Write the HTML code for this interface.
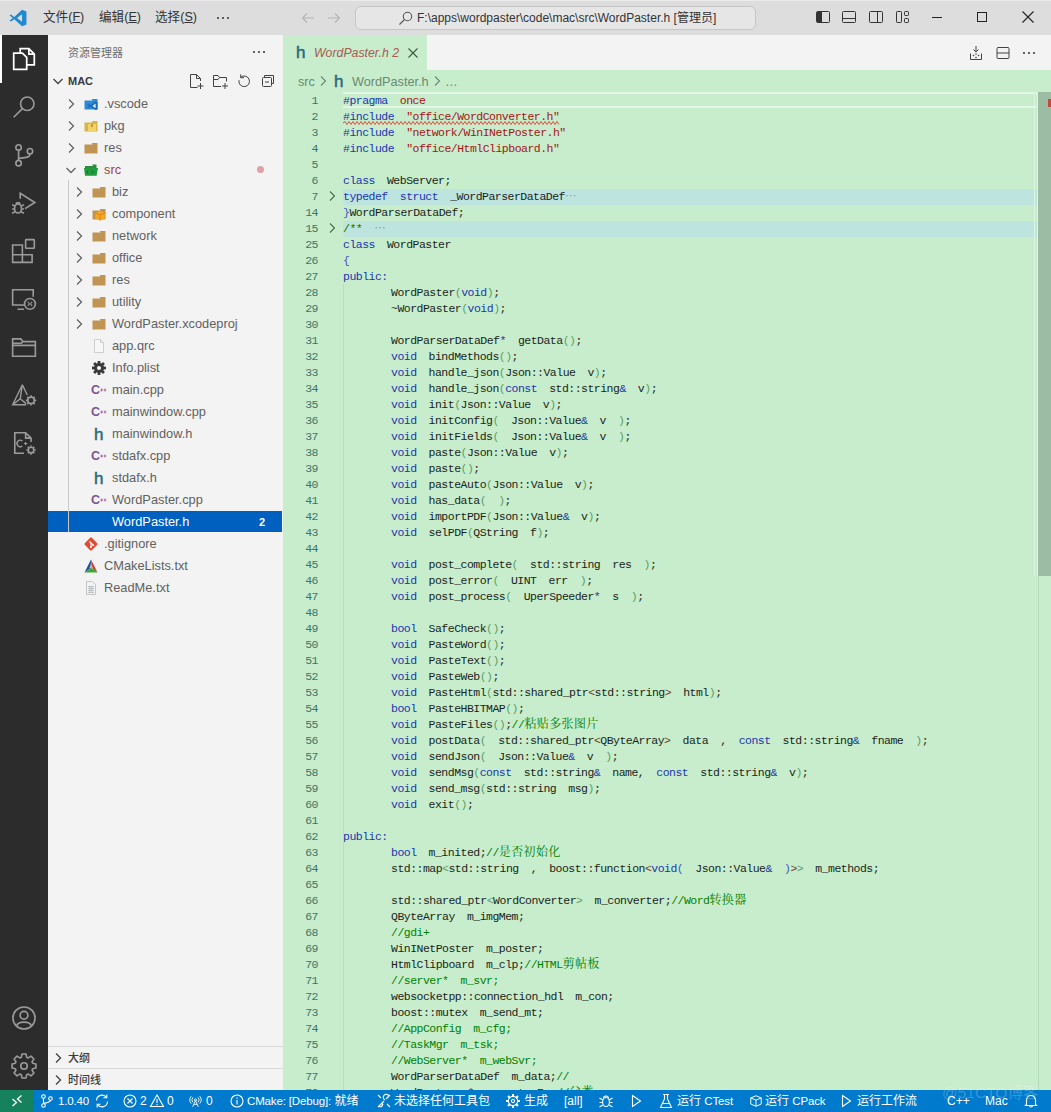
<!DOCTYPE html>
<html lang="zh-CN">
<head>
<meta charset="utf-8">
<title>WordPaster.h - mac - Visual Studio Code</title>
<style>
html,body{margin:0;padding:0;}
body{width:1051px;height:1112px;overflow:hidden;position:relative;background:#c7edcc;
  font-family:"Liberation Sans","Noto Sans CJK SC",sans-serif;font-size:13px;color:#616161;}
*{box-sizing:border-box;}
.a{position:absolute;}
svg{display:block;position:absolute;overflow:visible;}
/* title bar */
#titlebar{position:absolute;left:0;top:0;width:1051px;height:35px;background:#dddddd;color:#333;}
#titlebar .menu{position:absolute;top:0;height:35px;line-height:34px;font-size:12.6px;color:#333;white-space:nowrap;}
#cmd{position:absolute;left:355px;top:6px;width:401px;height:24px;border:1px solid #c6c6c6;border-radius:6px;background:#e6e6e6;}
#cmd span{position:absolute;left:61px;top:0;line-height:22px;font-size:12px;color:#333;white-space:nowrap;}
/* activity bar */
#activity{position:absolute;left:0;top:35px;width:48px;height:1055px;background:#2c2c2c;}
/* sidebar */
#sidebar{position:absolute;left:48px;top:35px;width:235px;height:1055px;background:#f3f3f3;overflow:hidden;}
.row{position:absolute;left:0;width:235px;height:22px;line-height:22px;font-size:12.8px;color:#616161;white-space:nowrap;}
.row .lbl{position:absolute;top:0;}
.sel{color:#fff;}
.pane{position:absolute;left:0;width:235px;height:23px;border-top:1px solid #d8d8d8;line-height:22px;font-size:11px;font-weight:500;color:#3b3b3b;}
/* editor */
#editor{position:absolute;left:283px;top:35px;width:768px;height:1055px;background:#c7edcc;overflow:hidden;}
#tabs{position:absolute;left:0;top:0;width:768px;height:35px;background:#f3f3f3;}
#tab{position:absolute;left:0;top:0;width:144px;height:35px;background:#c7edcc;}
#crumbs{position:absolute;left:0;top:35px;width:768px;height:22px;line-height:25px;color:#6b8a72;font-size:12.7px;white-space:nowrap;}
#code{position:absolute;left:0;top:58px;width:768px;height:998px;overflow:hidden;}
.ln{position:absolute;left:0;width:768px;height:16px;line-height:16px;white-space:pre;
  font-family:"Liberation Mono","Noto Serif CJK SC",monospace;font-size:11.5px;letter-spacing:-0.52px;word-spacing:5.7px;color:#1a1f1a;}
.ln .n{position:absolute;left:0;top:0;width:35px;text-align:right;color:#36776e;}
.ln .c{position:absolute;left:60px;top:0;}
.ln .t{position:absolute;left:108px;top:0;}
.fold{background:#bde4df;}
.k{color:#2036ae;} .s{color:#a31515;} .m{color:#008000;} .b1{color:#3a55c8;} .b2{color:#5c9e68;} .b3{color:#7b3814;}
.cj{line-height:0;font-size:12px;letter-spacing:0.38px;font-family:"Noto Serif CJK SC","Liberation Mono",serif;}
/* status */
#status{position:absolute;left:0;top:1090px;width:1051px;height:22px;background:#007acc;color:#fff;font-size:12px;line-height:22px;white-space:nowrap;}
#status .it{position:absolute;top:0;height:22px;}
.l{font-style:normal;font-size:11.5px;letter-spacing:-0.15px;}
</style>
</head>
<body>
<div id="titlebar">
<div class="a" style="left:0;top:0;width:1051px;height:1px;background:#ebebeb"></div>
<svg style="left:8.5px;top:8.5px" width="18" height="18" viewBox="0 0 16 16"><path d="M11.6 0.6 L4.7 7 L1.8 4.8 L0.5 5.5 L3.3 8 L0.5 10.5 L1.8 11.2 L4.7 9 L11.6 15.4 L15.5 13.8 V2.2 Z M11.6 4.6 V11.4 L7.1 8 Z" fill="#1f8ad2" fill-rule="evenodd"/></svg>
<div class="menu" style="left:43px">文件(<u>F</u>)</div>
<div class="menu" style="left:99px">编辑(<u>E</u>)</div>
<div class="menu" style="left:155px">选择(<u>S</u>)</div>
<svg style="left:215px;top:10px" width="16" height="16" viewBox="0 0 16 16"><circle cx="3" cy="8" r="1" fill="#333"/><circle cx="8" cy="8" r="1" fill="#333"/><circle cx="13" cy="8" r="1" fill="#333"/></svg>
<svg style="left:300px;top:10px" width="16" height="16" viewBox="0 0 16 16"><path d="M14 8 H2.5 M7 3.5 L2.5 8 L7 12.5" fill="none" stroke="#b4b4b4" stroke-width="1.1"/></svg>
<svg style="left:326px;top:10px" width="16" height="16" viewBox="0 0 16 16"><path d="M2 8 H13.5 M9 3.5 L13.5 8 L9 12.5" fill="none" stroke="#b4b4b4" stroke-width="1.1"/></svg>
<div id="cmd"><svg style="left:42px;top:3px" width="16" height="16" viewBox="0 0 16 16"><circle cx="9.5" cy="6.5" r="4.2" fill="none" stroke="#555" stroke-width="1.1"/><path d="M6.5 9.5 L1.5 14.5" stroke="#555" stroke-width="1.1"/></svg><span>F:\apps\wordpaster\code\mac\src\WordPaster.h [管理员]</span></div>
<svg style="left:815px;top:9px" width="16" height="16" viewBox="0 0 16 16"><rect x="1.5" y="2.5" width="13" height="11" rx="1" fill="none" stroke="#333" stroke-width="1"/><rect x="2" y="3" width="5" height="10" fill="#333"/></svg>
<svg style="left:841px;top:9px" width="16" height="16" viewBox="0 0 16 16"><rect x="1.5" y="2.5" width="13" height="11" rx="1" fill="none" stroke="#333" stroke-width="1"/><path d="M1.5 9.5 H14.5" fill="none" stroke="#333" stroke-width="1"/></svg>
<svg style="left:868px;top:9px" width="16" height="16" viewBox="0 0 16 16"><rect x="1.5" y="2.5" width="13" height="11" rx="1" fill="none" stroke="#333" stroke-width="1"/><path d="M9.5 2.5 V13.5" fill="none" stroke="#333" stroke-width="1"/></svg>
<svg style="left:895px;top:9px" width="16" height="16" viewBox="0 0 16 16"><rect x="1.5" y="2.5" width="5" height="11" rx="0.8" fill="none" stroke="#333" stroke-width="1"/><rect x="9.5" y="2.5" width="4" height="4" rx="0.8" fill="none" stroke="#333" stroke-width="1"/><rect x="9.5" y="9.5" width="4" height="4" rx="0.8" fill="none" stroke="#333" stroke-width="1"/></svg>
<div class="a" style="left:932px;top:17px;width:10px;height:1px;background:#222"></div>
<div class="a" style="left:977px;top:12px;width:10px;height:10px;border:1px solid #222"></div>
<svg style="left:1022px;top:11px" width="12" height="12" viewBox="0 0 12 12"><path d="M0.5 0.5 L11.5 11.5 M11.5 0.5 L0.5 11.5" stroke="#222" stroke-width="1.1"/></svg>
</div>
<div id="activity">
<div class="a" style="left:0;top:0;width:2px;height:48px;background:#fff"></div>
<svg style="left:11px;top:11px" width="26" height="26" viewBox="0 0 24 24"><path d="M8.5 6.5 V2.5 H16.5 L21.5 7.5 V17.5 H14.5 M16.5 2.5 V7.5 H21.5" fill="none" stroke="#fff" stroke-width="1.6"/><path d="M2.5 6.5 H10.5 L14.5 10.5 V21.5 H2.5 Z" fill="none" stroke="#fff" stroke-width="1.6"/></svg>
<svg style="left:11px;top:59px" width="26" height="26" viewBox="0 0 24 24"><circle cx="15" cy="9" r="6.2" fill="none" stroke="#9a9a9a" stroke-width="1.5"/><path d="M10.5 13.5 L2.5 21.5" fill="none" stroke="#9a9a9a" stroke-width="1.5"/></svg>
<svg style="left:11px;top:107px" width="26" height="26" viewBox="0 0 24 24"><circle cx="7" cy="5" r="2.5" fill="none" stroke="#9a9a9a" stroke-width="1.5"/><circle cx="7" cy="19.5" r="2.5" fill="none" stroke="#9a9a9a" stroke-width="1.5"/><circle cx="17.5" cy="8.5" r="2.5" fill="none" stroke="#9a9a9a" stroke-width="1.5"/><path d="M7 7.5 V17 M17.5 11 C17.5 14.5 13 14.5 7.5 15" fill="none" stroke="#9a9a9a" stroke-width="1.5"/></svg>
<svg style="left:11px;top:155px" width="26" height="26" viewBox="0 0 24 24"><path d="M8.5 8 V3 L22 11.5 L13 17.2" fill="none" stroke="#9a9a9a" stroke-width="1.5"/><ellipse cx="6.5" cy="17" rx="3.2" ry="4.2" fill="none" stroke="#9a9a9a" stroke-width="1.5"/><path d="M1 13.5 L3.8 15 M1 17.5 H3.3 M1 21.5 L3.8 20 M12 13.5 L9.2 15 M12 17.5 H9.7 M12 21.5 L9.2 20 M4.5 12.8 A2.2 2.2 0 0 1 8.5 12.8" fill="none" stroke="#9a9a9a" stroke-width="1.5"/></svg>
<svg style="left:11px;top:203px" width="26" height="26" viewBox="0 0 24 24"><path d="M1.5 6.5 H10.5 V15.5 H19.5 V22.5 H1.5 Z M1.5 15.5 H10.5 V22.5" fill="none" stroke="#9a9a9a" stroke-width="1.5"/><rect x="13.5" y="1.5" width="8" height="8" rx="0.5" fill="none" stroke="#9a9a9a" stroke-width="1.5"/></svg>
<svg style="left:11px;top:251px" width="26" height="26" viewBox="0 0 24 24"><path d="M12 17.5 H1.5 V3.5 H20.5 V10 M6 21.5 H12" fill="none" stroke="#9a9a9a" stroke-width="1.5"/><circle cx="17.5" cy="16.5" r="5" fill="none" stroke="#9a9a9a" stroke-width="1.5"/><path d="M15.5 14.5 L17 16.5 L15.5 18.5 M19.5 14.5 L18 16.5 L19.5 18.5" fill="none" stroke="#9a9a9a" stroke-width="1"/></svg>
<svg style="left:11px;top:299px" width="26" height="26" viewBox="0 0 24 24"><path d="M1.5 20.5 V4.5 H9 L11 7 H22.5 V20.5 Z M1.5 10.5 H22.5" fill="none" stroke="#9a9a9a" stroke-width="1.5"/><path d="M1.5 8.5 H9.5 L11 7" fill="none" stroke="#9a9a9a" stroke-width="1.5"/></svg>
<svg style="left:11px;top:347px" width="26" height="26" viewBox="0 0 24 24"><path d="M10.5 2.5 L1.5 21 H14 M10.5 2.5 L15 12 M10.5 2.5 L8.5 15.5 L1.5 21 M8.5 15.5 L14 20" fill="none" stroke="#9a9a9a" stroke-width="1.3"/><circle cx="18.5" cy="17" r="3" fill="none" stroke="#9a9a9a" stroke-width="1.5"/><path d="M18.5 12.2 V13.5 M18.5 20.5 V21.8 M13.7 17 H15 M22 17 H23.3 M15.1 13.6 L16 14.5 M21 19.5 L21.9 20.4 M21.9 13.6 L21 14.5 M16 19.5 L15.1 20.4" fill="none" stroke="#9a9a9a" stroke-width="1.5"/></svg>
<svg style="left:11px;top:395px" width="26" height="26" viewBox="0 0 24 24"><path d="M12 21.5 H3.5 V2.5 H13.5 L18.5 7.5 V11 M13.5 2.5 V7.5 H18.5" fill="none" stroke="#9a9a9a" stroke-width="1.5"/><path d="M10.5 10.2 A3 3 0 1 0 10.5 14.8" fill="none" stroke="#9a9a9a" stroke-width="1.3"/><path d="M12 12.5 H15 M13.5 11 V14" stroke="#9a9a9a" stroke-width="1"/><circle cx="18.5" cy="18.5" r="2.6" fill="none" stroke="#9a9a9a" stroke-width="1.5"/><path d="M18.5 14.2 V15.5 M18.5 21.5 V22.8 M14.2 18.5 H15.5 M21.5 18.5 H22.8 M15.5 15.5 L16.4 16.4 M20.6 20.6 L21.5 21.5 M21.5 15.5 L20.6 16.4 M16.4 20.6 L15.5 21.5" fill="none" stroke="#9a9a9a" stroke-width="1.5"/></svg>
<svg style="left:11px;top:970px" width="26" height="26" viewBox="0 0 24 24"><circle cx="12" cy="12" r="10.2" fill="none" stroke="#9a9a9a" stroke-width="1.5"/><circle cx="12" cy="9.5" r="3.6" fill="none" stroke="#9a9a9a" stroke-width="1.5"/><path d="M5 19.5 C6.5 14.5 17.5 14.5 19 19.5" fill="none" stroke="#9a9a9a" stroke-width="1.5"/></svg>
<svg style="left:11px;top:1018px" width="26" height="26" viewBox="0 0 24 24"><path d="M9.52 3.98 L10.11 0.96 L13.89 0.96 L14.48 3.98 L15.92 4.57 L18.47 2.85 L21.15 5.53 L19.43 8.08 L20.02 9.52 L23.04 10.11 L23.04 13.89 L20.02 14.48 L19.43 15.92 L21.15 18.47 L18.47 21.15 L15.92 19.43 L14.48 20.02 L13.89 23.04 L10.11 23.04 L9.52 20.02 L8.08 19.43 L5.53 21.15 L2.85 18.47 L4.57 15.92 L3.98 14.48 L0.96 13.89 L0.96 10.11 L3.98 9.52 L4.57 8.08 L2.85 5.53 L5.53 2.85 L8.08 4.57 Z" fill="none" stroke="#9a9a9a" stroke-width="1.5" stroke-linejoin="round"/><circle cx="12" cy="12" r="3" fill="none" stroke="#9a9a9a" stroke-width="1.5"/></svg>
</div>
<div id="sidebar">
<div class="a" style="left:20px;top:0;height:35px;line-height:36px;font-size:11px;color:#6f6f6f;white-space:nowrap">资源管理器</div>
<svg style="left:203px;top:9px" width="16" height="16" viewBox="0 0 16 16"><circle cx="3" cy="8" r="1.1" fill="#424242"/><circle cx="8" cy="8" r="1.1" fill="#424242"/><circle cx="13" cy="8" r="1.1" fill="#424242"/></svg>
<svg style="left:2px;top:38px" width="16" height="16" viewBox="0 0 16 16"><path d="M3.5 6 L8 10.5 L12.5 6" fill="none" stroke="#424242" stroke-width="1.3"/></svg>
<div class="a" style="left:20px;top:35px;height:22px;line-height:22px;font-size:11px;font-weight:bold;color:#3b3b3b">MAC</div>
<svg style="left:140px;top:38px" width="16" height="16" viewBox="0 0 16 16"><path d="M9.5 14.5 H2.5 V1.5 H8.5 L12.5 5.5 V8 M8.5 1.5 V5.5 H12.5 M12.5 10 V16 M9.5 13 H15.5" fill="none" stroke="#424242" stroke-width="1"/></svg>
<svg style="left:164px;top:38px" width="16" height="16" viewBox="0 0 16 16"><path d="M9 13.5 H1.5 V2.5 H6 L7.5 4.5 H14.5 V8.5 M1.5 6.5 H6 L7.5 4.5 M13 10 V16 M10 13 H16" fill="none" stroke="#424242" stroke-width="1"/></svg>
<svg style="left:188px;top:38px" width="16" height="16" viewBox="0 0 16 16"><path d="M4.6 4.4 A5.3 5.3 0 1 1 3 7.2" fill="none" stroke="#424242" stroke-width="1"/><path d="M4.7 1.4 V4.7 H8" fill="none" stroke="#424242" stroke-width="1"/></svg>
<svg style="left:212px;top:38px" width="16" height="16" viewBox="0 0 16 16"><path d="M4.5 4.5 V2.5 H13.5 V10.5 H11.5" fill="none" stroke="#424242" stroke-width="1"/><rect x="2.5" y="4.5" width="9" height="9" rx="1" fill="none" stroke="#424242" stroke-width="1"/><path d="M5 9 H9" fill="none" stroke="#424242" stroke-width="1"/></svg>
<div class="row" style="top:58px">
<svg style="left:15px;top:3px" width="16" height="16" viewBox="0 0 16 16"><path d="M6 3.5 L10.5 8 L6 12.5" fill="none" stroke="#646465" stroke-width="1.3"/></svg>
<svg style="left:35px;top:3px" width="16" height="16" viewBox="0 0 16 16"><path d="M8.6 3 L9.6 4.4 H1.5 V13.5 H14.5 V3 Z" fill="#2f8ad6"/><path d="M12.8 5.2 L7.2 9.2 L5 7.6 L4 8.2 L6 10 L4 11.8 L5 12.4 L7.2 10.8 L12.8 14 L14.5 13.2 V6 Z" fill="#1b6bb8"/><path d="M12.6 7.6 L9.4 10 L12.6 12.2 Z" fill="#d6ecff"/></svg>
<span class="lbl" style="left:56px;">.vscode</span>
</div>
<div class="row" style="top:80px">
<svg style="left:15px;top:3px" width="16" height="16" viewBox="0 0 16 16"><path d="M6 3.5 L10.5 8 L6 12.5" fill="none" stroke="#646465" stroke-width="1.3"/></svg>
<svg style="left:35px;top:3px" width="16" height="16" viewBox="0 0 16 16"><path d="M8.6 3 L9.6 4.4 H1.5 V13.5 H14.5 V3 Z" fill="#d9b44a"/><rect x="5" y="6" width="8" height="7" fill="#f0d36a"/><rect x="8" y="6" width="2" height="3" fill="#c99a2e"/></svg>
<span class="lbl" style="left:56px;">pkg</span>
</div>
<div class="row" style="top:102px">
<svg style="left:15px;top:3px" width="16" height="16" viewBox="0 0 16 16"><path d="M6 3.5 L10.5 8 L6 12.5" fill="none" stroke="#646465" stroke-width="1.3"/></svg>
<svg style="left:35px;top:3px" width="16" height="16" viewBox="0 0 16 16"><path d="M8.6 3 L9.6 4.4 H1.5 V13.5 H14.5 V3 Z" fill="#c09553"/></svg>
<span class="lbl" style="left:56px;">res</span>
</div>
<div class="row" style="top:124px">
<svg style="left:15px;top:3px" width="16" height="16" viewBox="0 0 16 16"><path d="M3.5 6 L8 10.5 L12.5 6" fill="none" stroke="#646465" stroke-width="1.3"/></svg>
<svg style="left:35px;top:3px" width="16" height="16" viewBox="0 0 16 16"><path d="M9 2.6 L10 4 H2 V13.6 H13.5 V2.6 Z" fill="#2e8b3d"/><path d="M1 6 H15 L13.5 13.6 H2 Z" fill="#1f9a3c"/><path d="M5 8.5 L3.8 9.8 L5 11.1 M9 8.5 L10.2 9.8 L9 11.1" stroke="#0d6b26" stroke-width="1" fill="none"/></svg>
<span class="lbl" style="left:56px;color:#a0454c;">src</span>
<div class="a" style="left:209px;top:7px;width:7px;height:7px;border-radius:4px;background:#e0a0a6"></div>
</div>
<div class="row" style="top:146px">
<svg style="left:23px;top:3px" width="16" height="16" viewBox="0 0 16 16"><path d="M6 3.5 L10.5 8 L6 12.5" fill="none" stroke="#646465" stroke-width="1.3"/></svg>
<svg style="left:43px;top:3px" width="16" height="16" viewBox="0 0 16 16"><path d="M8.6 3 L9.6 4.4 H1.5 V13.5 H14.5 V3 Z" fill="#c09553"/></svg>
<span class="lbl" style="left:64px;">biz</span>
</div>
<div class="row" style="top:168px">
<svg style="left:23px;top:3px" width="16" height="16" viewBox="0 0 16 16"><path d="M6 3.5 L10.5 8 L6 12.5" fill="none" stroke="#646465" stroke-width="1.3"/></svg>
<svg style="left:43px;top:3px" width="16" height="16" viewBox="0 0 16 16"><path d="M8.6 3 L9.6 4.4 H1.5 V13.5 H14.5 V3 Z" fill="#c09553"/><path d="M9 5 L14.5 7 V12 L9 14.5 L4.5 12 V7 Z" fill="#f5a623"/><path d="M4.5 7 L9 9 L14.5 7 M9 9 V14.5" stroke="#d9831a" stroke-width="1" fill="none"/></svg>
<span class="lbl" style="left:64px;">component</span>
</div>
<div class="row" style="top:190px">
<svg style="left:23px;top:3px" width="16" height="16" viewBox="0 0 16 16"><path d="M6 3.5 L10.5 8 L6 12.5" fill="none" stroke="#646465" stroke-width="1.3"/></svg>
<svg style="left:43px;top:3px" width="16" height="16" viewBox="0 0 16 16"><path d="M8.6 3 L9.6 4.4 H1.5 V13.5 H14.5 V3 Z" fill="#c09553"/></svg>
<span class="lbl" style="left:64px;">network</span>
</div>
<div class="row" style="top:212px">
<svg style="left:23px;top:3px" width="16" height="16" viewBox="0 0 16 16"><path d="M6 3.5 L10.5 8 L6 12.5" fill="none" stroke="#646465" stroke-width="1.3"/></svg>
<svg style="left:43px;top:3px" width="16" height="16" viewBox="0 0 16 16"><path d="M8.6 3 L9.6 4.4 H1.5 V13.5 H14.5 V3 Z" fill="#c09553"/></svg>
<span class="lbl" style="left:64px;">office</span>
</div>
<div class="row" style="top:234px">
<svg style="left:23px;top:3px" width="16" height="16" viewBox="0 0 16 16"><path d="M6 3.5 L10.5 8 L6 12.5" fill="none" stroke="#646465" stroke-width="1.3"/></svg>
<svg style="left:43px;top:3px" width="16" height="16" viewBox="0 0 16 16"><path d="M8.6 3 L9.6 4.4 H1.5 V13.5 H14.5 V3 Z" fill="#c09553"/></svg>
<span class="lbl" style="left:64px;">res</span>
</div>
<div class="row" style="top:256px">
<svg style="left:23px;top:3px" width="16" height="16" viewBox="0 0 16 16"><path d="M6 3.5 L10.5 8 L6 12.5" fill="none" stroke="#646465" stroke-width="1.3"/></svg>
<svg style="left:43px;top:3px" width="16" height="16" viewBox="0 0 16 16"><path d="M8.6 3 L9.6 4.4 H1.5 V13.5 H14.5 V3 Z" fill="#c09553"/></svg>
<span class="lbl" style="left:64px;">utility</span>
</div>
<div class="row" style="top:278px">
<svg style="left:23px;top:3px" width="16" height="16" viewBox="0 0 16 16"><path d="M6 3.5 L10.5 8 L6 12.5" fill="none" stroke="#646465" stroke-width="1.3"/></svg>
<svg style="left:43px;top:3px" width="16" height="16" viewBox="0 0 16 16"><path d="M8.6 3 L9.6 4.4 H1.5 V13.5 H14.5 V3 Z" fill="#c09553"/></svg>
<span class="lbl" style="left:64px;">WordPaster.xcodeproj</span>
</div>
<div class="row" style="top:300px">
<svg style="left:43px;top:3px" width="16" height="16" viewBox="0 0 16 16"><path d="M3.5 1.5 H9.5 L12.5 4.5 V14.5 H3.5 Z" fill="#f7f7f7" stroke="#cfcfcf" stroke-width="1"/><path d="M9.5 1.5 V4.5 H12.5" fill="none" stroke="#cfcfcf" stroke-width="1"/></svg>
<span class="lbl" style="left:64px;">app.qrc</span>
</div>
<div class="row" style="top:322px">
<svg style="left:43px;top:3px" width="16" height="16" viewBox="0 0 16 16"><g fill="#3a3a3a"><circle cx="8" cy="8" r="5"/><rect x="6.6" y="1" width="2.8" height="14" transform="rotate(0 8 8)"/><rect x="6.6" y="1" width="2.8" height="14" transform="rotate(45 8 8)"/><rect x="6.6" y="1" width="2.8" height="14" transform="rotate(90 8 8)"/><rect x="6.6" y="1" width="2.8" height="14" transform="rotate(135 8 8)"/></g><circle cx="8" cy="8" r="2.1" fill="#f3f3f3"/></svg>
<span class="lbl" style="left:64px;">Info.plist</span>
</div>
<div class="row" style="top:344px">
<svg style="left:43px;top:3px" width="16" height="16" viewBox="0 0 16 16"><text x="0" y="12.2" font-family="Liberation Sans,sans-serif" font-weight="bold" font-size="12.5" fill="#7a5590">C</text><path d="M9.2 8 H12 M10.6 6.6 V9.4 M12.6 8 H15.4 M14 6.6 V9.4" stroke="#b06aa0" stroke-width="1.1"/></svg>
<span class="lbl" style="left:64px;">main.cpp</span>
</div>
<div class="row" style="top:366px">
<svg style="left:43px;top:3px" width="16" height="16" viewBox="0 0 16 16"><text x="0" y="12.2" font-family="Liberation Sans,sans-serif" font-weight="bold" font-size="12.5" fill="#7a5590">C</text><path d="M9.2 8 H12 M10.6 6.6 V9.4 M12.6 8 H15.4 M14 6.6 V9.4" stroke="#b06aa0" stroke-width="1.1"/></svg>
<span class="lbl" style="left:64px;">mainwindow.cpp</span>
</div>
<div class="row" style="top:388px">
<svg style="left:43px;top:3px" width="16" height="16" viewBox="0 0 16 16"><text x="3" y="13.5" font-family="Liberation Sans,sans-serif" font-size="17" fill="#2a6a7c" stroke="#2a6a7c" stroke-width="0.5">h</text></svg>
<span class="lbl" style="left:64px;">mainwindow.h</span>
</div>
<div class="row" style="top:410px">
<svg style="left:43px;top:3px" width="16" height="16" viewBox="0 0 16 16"><text x="0" y="12.2" font-family="Liberation Sans,sans-serif" font-weight="bold" font-size="12.5" fill="#7a5590">C</text><path d="M9.2 8 H12 M10.6 6.6 V9.4 M12.6 8 H15.4 M14 6.6 V9.4" stroke="#b06aa0" stroke-width="1.1"/></svg>
<span class="lbl" style="left:64px;">stdafx.cpp</span>
</div>
<div class="row" style="top:432px">
<svg style="left:43px;top:3px" width="16" height="16" viewBox="0 0 16 16"><text x="3" y="13.5" font-family="Liberation Sans,sans-serif" font-size="17" fill="#2a6a7c" stroke="#2a6a7c" stroke-width="0.5">h</text></svg>
<span class="lbl" style="left:64px;">stdafx.h</span>
</div>
<div class="row" style="top:454px">
<svg style="left:43px;top:3px" width="16" height="16" viewBox="0 0 16 16"><text x="0" y="12.2" font-family="Liberation Sans,sans-serif" font-weight="bold" font-size="12.5" fill="#7a5590">C</text><path d="M9.2 8 H12 M10.6 6.6 V9.4 M12.6 8 H15.4 M14 6.6 V9.4" stroke="#b06aa0" stroke-width="1.1"/></svg>
<span class="lbl" style="left:64px;">WordPaster.cpp</span>
</div>
<div class="row sel" style="top:476px">
<div class="a" style="left:0;top:0;width:234px;height:21px;background:#0060c0"></div><div class="a" style="left:20px;top:0;width:1px;height:21px;background:#5a9ae0"></div>
<span class="lbl" style="left:64px;">WordPaster.h</span>
<span class="a" style="left:211px;top:0;font-size:11px;font-weight:bold;color:#fff">2</span>
</div>
<div class="row" style="top:498px">
<svg style="left:35px;top:3px" width="16" height="16" viewBox="0 0 16 16"><rect x="3" y="3" width="10" height="10" rx="1.2" transform="rotate(45 8 8)" fill="#dd4c35"/><path d="M6.5 5.5 L9.5 8.5 M8 7 V11" stroke="#fff" stroke-width="1.1" fill="none"/><circle cx="8" cy="11" r="1" fill="#fff"/><circle cx="10" cy="9" r="1" fill="#fff"/></svg>
<span class="lbl" style="left:56px;">.gitignore</span>
</div>
<div class="row" style="top:520px">
<svg style="left:35px;top:3px" width="16" height="16" viewBox="0 0 16 16"><path d="M8 1.5 L1.5 14.5 L9 9 Z" fill="#1f4fa3"/><path d="M8 1.5 L14.5 14.5 L9.6 10.5 Z" fill="#d9352b"/><path d="M1.5 14.5 H14.5 L8.2 9.6 Z" fill="#3ea63a"/><path d="M8 5 L6.5 10 L9.6 10.5Z" fill="#b9b9b9"/></svg>
<span class="lbl" style="left:56px;">CMakeLists.txt</span>
</div>
<div class="row" style="top:542px">
<svg style="left:35px;top:3px" width="16" height="16" viewBox="0 0 16 16"><path d="M3.5 1.5 H9.5 L12.5 4.5 V14.5 H3.5 Z" fill="#f2f2f2" stroke="#c4c4c4" stroke-width="1"/><path d="M5 6.5 H11 M5 8.5 H11 M5 10.5 H11 M5 12.5 H11 M7 6.5 V12.5 M9 6.5 V12.5" stroke="#b9bcc2" stroke-width="0.9"/></svg>
<span class="lbl" style="left:56px;">ReadMe.txt</span>
</div>
<div class="a" style="left:20px;top:145px;width:1px;height:352px;background:#c9c9c9"></div>
<div class="pane" style="top:1011px;height:22px"><svg style="left:2px;top:3px" width="16" height="16" viewBox="0 0 16 16"><path d="M6 3.5 L10.5 8 L6 12.5" fill="none" stroke="#424242" stroke-width="1.3"/></svg><span class="a" style="left:20px;top:0">大纲</span></div>
<div class="pane" style="top:1033px"><svg style="left:2px;top:3px" width="16" height="16" viewBox="0 0 16 16"><path d="M6 3.5 L10.5 8 L6 12.5" fill="none" stroke="#424242" stroke-width="1.3"/></svg><span class="a" style="left:20px;top:0">时间线</span></div>
</div>
<div id="editor">
<div id="tabs"><div class="a" style="left:0;top:0;width:768px;height:35px;background:#f3f3f3"></div>
<div id="tab"><svg style="left:10px;top:9px" width="16" height="16" viewBox="0 0 16 16"><text x="3" y="13.5" font-family="Liberation Sans,sans-serif" font-size="17" fill="#2a6a7c" stroke="#2a6a7c" stroke-width="0.5">h</text></svg><span class="a" style="left:31px;top:0;line-height:36px;font-size:12.3px;font-style:italic;color:#a85a52;white-space:nowrap">WordPaster.h&nbsp;2</span>
<svg style="left:122px;top:10px" width="16" height="16" viewBox="0 0 16 16"><path d="M3.5 3.5 L12.5 12.5 M12.5 3.5 L3.5 12.5" stroke="#3c5a42" stroke-width="1.1"/></svg></div>
<svg style="left:685px;top:10px" width="16" height="16" viewBox="0 0 16 16"><path d="M2.5 8.5 V14.5 H13.5 V8.5 M8 1 V7 M5.5 4.5 L8 7 L10.5 4.5" fill="none" stroke="#424242" stroke-width="1"/><circle cx="5.5" cy="10.5" r="0.8" fill="#424242"/><circle cx="8" cy="12.5" r="0.8" fill="#424242"/><circle cx="10.5" cy="10.5" r="0.8" fill="#424242"/><circle cx="8" cy="9" r="0.8" fill="#424242"/></svg>
<svg style="left:712px;top:10px" width="16" height="16" viewBox="0 0 16 16"><rect x="2" y="2.5" width="12" height="11" rx="1" fill="none" stroke="#424242" stroke-width="1"/><path d="M2 8 H14" fill="none" stroke="#424242" stroke-width="1"/></svg>
<svg style="left:738px;top:10px" width="16" height="16" viewBox="0 0 16 16"><circle cx="3" cy="8" r="1.1" fill="#424242"/><circle cx="8" cy="8" r="1.1" fill="#424242"/><circle cx="13" cy="8" r="1.1" fill="#424242"/></svg>
</div>
<div id="crumbs">
<span class="a" style="left:15px;top:0">src</span>
<svg style="left:31.5px;top:3px" width="16" height="16" viewBox="0 0 16 16"><path d="M6 3.5 L10.5 8 L6 12.5" fill="none" stroke="#6b8a72" stroke-width="1.1"/></svg>
<svg style="left:47.5px;top:3px" width="16" height="16" viewBox="0 0 16 16"><text x="3" y="13.5" font-family="Liberation Sans,sans-serif" font-size="17" fill="#2a6a7c" stroke="#2a6a7c" stroke-width="0.5">h</text></svg>
<span class="a" style="left:69px;top:0">WordPaster.h</span>
<svg style="left:146px;top:3px" width="16" height="16" viewBox="0 0 16 16"><path d="M6 3.5 L10.5 8 L6 12.5" fill="none" stroke="#6b8a72" stroke-width="1.1"/></svg>
<span class="a" style="left:162px;top:0">…</span>
</div>
<div id="code">
<div class="ln" style="top:0px"><span class="n">1</span><span class="c"><span class="k">#pragma</span> <span class="s">once</span></span></div>
<div class="ln" style="top:16px"><span class="n">2</span><span class="c"><span class="sq"><span class="k">#include</span> <span class="s">"office/WordConverter.h"</span></span></span></div>
<div class="ln" style="top:32px"><span class="n">3</span><span class="c"><span class="k">#include</span> <span class="s">"network/WinINetPoster.h"</span></span></div>
<div class="ln" style="top:48px"><span class="n">4</span><span class="c"><span class="k">#include</span> <span class="s">"office/HtmlClipboard.h"</span></span></div>
<div class="ln" style="top:64px"><span class="n">5</span><span class="c"></span></div>
<div class="ln" style="top:80px"><span class="n">6</span><span class="c"><span class="k">class</span> WebServer;</span></div>
<div class="ln" style="top:96px"><div class="a fold" style="left:60px;top:0;width:695px;height:16px"></div><span class="n">7</span><span class="c"><span class="k">typedef</span> <span class="k">struct</span> _WordParserDataDef<span style="color:#7a9a8a;letter-spacing:0">&#8943;</span></span></div>
<div class="ln" style="top:112px"><span class="n">14</span><span class="c"><span class="b1">}</span>WordParserDataDef;</span></div>
<div class="ln" style="top:128px"><div class="a fold" style="left:60px;top:0;width:695px;height:16px"></div><span class="n">15</span><span class="c"><span class="m">/**</span> <span style="color:#7a9a8a;letter-spacing:0">&#8943;</span></span></div>
<div class="ln" style="top:144px"><span class="n">25</span><span class="c"><span class="k">class</span> WordPaster</span></div>
<div class="ln" style="top:160px"><span class="n">26</span><span class="c"><span class="b1">{</span></span></div>
<div class="ln" style="top:176px"><span class="n">27</span><span class="c"><span class="k">public:</span></span></div>
<div class="ln" style="top:192px"><span class="n">28</span><span class="t">WordPaster<span class="b2">(</span><span class="k">void</span><span class="b2">)</span>;</span></div>
<div class="ln" style="top:208px"><span class="n">29</span><span class="t">~WordPaster<span class="b2">(</span><span class="k">void</span><span class="b2">)</span>;</span></div>
<div class="ln" style="top:224px"><span class="n">30</span><span class="t"></span></div>
<div class="ln" style="top:240px"><span class="n">31</span><span class="t">WordParserDataDef<span class="k">*</span> getData<span class="b2">(</span><span class="b2">)</span>;</span></div>
<div class="ln" style="top:256px"><span class="n">32</span><span class="t"><span class="k">void</span> bindMethods<span class="b2">(</span><span class="b2">)</span>;</span></div>
<div class="ln" style="top:272px"><span class="n">33</span><span class="t"><span class="k">void</span> handle_json<span class="b2">(</span>Json::Value v<span class="b2">)</span>;</span></div>
<div class="ln" style="top:288px"><span class="n">34</span><span class="t"><span class="k">void</span> handle_json<span class="b2">(</span><span class="k">const</span> std::string<span class="k">&amp;</span> v<span class="b2">)</span>;</span></div>
<div class="ln" style="top:304px"><span class="n">35</span><span class="t"><span class="k">void</span> init<span class="b2">(</span>Json::Value v<span class="b2">)</span>;</span></div>
<div class="ln" style="top:320px"><span class="n">36</span><span class="t"><span class="k">void</span> initConfig<span class="b2">(</span> Json::Value<span class="k">&amp;</span> v <span class="b2">)</span>;</span></div>
<div class="ln" style="top:336px"><span class="n">37</span><span class="t"><span class="k">void</span> initFields<span class="b2">(</span> Json::Value<span class="k">&amp;</span> v <span class="b2">)</span>;</span></div>
<div class="ln" style="top:352px"><span class="n">38</span><span class="t"><span class="k">void</span> paste<span class="b2">(</span>Json::Value v<span class="b2">)</span>;</span></div>
<div class="ln" style="top:368px"><span class="n">39</span><span class="t"><span class="k">void</span> paste<span class="b2">(</span><span class="b2">)</span>;</span></div>
<div class="ln" style="top:384px"><span class="n">40</span><span class="t"><span class="k">void</span> pasteAuto<span class="b2">(</span>Json::Value v<span class="b2">)</span>;</span></div>
<div class="ln" style="top:400px"><span class="n">41</span><span class="t"><span class="k">void</span> has_data<span class="b2">(</span> <span class="b2">)</span>;</span></div>
<div class="ln" style="top:416px"><span class="n">42</span><span class="t"><span class="k">void</span> importPDF<span class="b2">(</span>Json::Value<span class="k">&amp;</span> v<span class="b2">)</span>;</span></div>
<div class="ln" style="top:432px"><span class="n">43</span><span class="t"><span class="k">void</span> selPDF<span class="b2">(</span>QString f<span class="b2">)</span>;</span></div>
<div class="ln" style="top:448px"><span class="n">44</span><span class="t"></span></div>
<div class="ln" style="top:464px"><span class="n">45</span><span class="t"><span class="k">void</span> post_complete<span class="b2">(</span> std::string res <span class="b2">)</span>;</span></div>
<div class="ln" style="top:480px"><span class="n">46</span><span class="t"><span class="k">void</span> post_error<span class="b2">(</span> UINT err <span class="b2">)</span>;</span></div>
<div class="ln" style="top:496px"><span class="n">47</span><span class="t"><span class="k">void</span> post_process<span class="b2">(</span> UperSpeeder<span class="k">*</span> s <span class="b2">)</span>;</span></div>
<div class="ln" style="top:512px"><span class="n">48</span><span class="t"></span></div>
<div class="ln" style="top:528px"><span class="n">49</span><span class="t"><span class="k">bool</span> SafeCheck<span class="b2">(</span><span class="b2">)</span>;</span></div>
<div class="ln" style="top:544px"><span class="n">50</span><span class="t"><span class="k">void</span> PasteWord<span class="b2">(</span><span class="b2">)</span>;</span></div>
<div class="ln" style="top:560px"><span class="n">51</span><span class="t"><span class="k">void</span> PasteText<span class="b2">(</span><span class="b2">)</span>;</span></div>
<div class="ln" style="top:576px"><span class="n">52</span><span class="t"><span class="k">void</span> PasteWeb<span class="b2">(</span><span class="b2">)</span>;</span></div>
<div class="ln" style="top:592px"><span class="n">53</span><span class="t"><span class="k">void</span> PasteHtml<span class="b2">(</span>std::shared_ptr<span class="b3">&lt;</span>std::string<span class="b3">&gt;</span> html<span class="b2">)</span>;</span></div>
<div class="ln" style="top:608px"><span class="n">54</span><span class="t"><span class="k">bool</span> PasteHBITMAP<span class="b2">(</span><span class="b2">)</span>;</span></div>
<div class="ln" style="top:624px"><span class="n">55</span><span class="t"><span class="k">void</span> PasteFiles<span class="b2">(</span><span class="b2">)</span>;<span class="m">//<span class="cj">粘贴多张图片</span></span></span></div>
<div class="ln" style="top:640px"><span class="n">56</span><span class="t"><span class="k">void</span> postData<span class="b2">(</span> std::shared_ptr<span class="b3">&lt;</span>QByteArray<span class="b3">&gt;</span> data , <span class="k">const</span> std::string<span class="k">&amp;</span> fname <span class="b2">)</span>;</span></div>
<div class="ln" style="top:656px"><span class="n">57</span><span class="t"><span class="k">void</span> sendJson<span class="b2">(</span> Json::Value<span class="k">&amp;</span> v <span class="b2">)</span>;</span></div>
<div class="ln" style="top:672px"><span class="n">58</span><span class="t"><span class="k">void</span> sendMsg<span class="b2">(</span><span class="k">const</span> std::string<span class="k">&amp;</span> name, <span class="k">const</span> std::string<span class="k">&amp;</span> v<span class="b2">)</span>;</span></div>
<div class="ln" style="top:688px"><span class="n">59</span><span class="t"><span class="k">void</span> send_msg<span class="b2">(</span>std::string msg<span class="b2">)</span>;</span></div>
<div class="ln" style="top:704px"><span class="n">60</span><span class="t"><span class="k">void</span> exit<span class="b2">(</span><span class="b2">)</span>;</span></div>
<div class="ln" style="top:720px"><span class="n">61</span><span class="t"></span></div>
<div class="ln" style="top:736px"><span class="n">62</span><span class="c"><span class="k">public:</span></span></div>
<div class="ln" style="top:752px"><span class="n">63</span><span class="t"><span class="k">bool</span> m_inited;<span class="m">//<span class="cj">是否初始化</span></span></span></div>
<div class="ln" style="top:768px"><span class="n">64</span><span class="t">std::map<span class="b2">&lt;</span>std::string , boost::function<span class="b3">&lt;</span><span class="k">void</span><span class="b1">(</span> Json::Value<span class="k">&amp;</span> <span class="b1">)</span><span class="b3">&gt;</span><span class="b2">&gt;</span> m_methods;</span></div>
<div class="ln" style="top:784px"><span class="n">65</span><span class="t"></span></div>
<div class="ln" style="top:800px"><span class="n">66</span><span class="t">std::shared_ptr<span class="b2">&lt;</span>WordConverter<span class="b2">&gt;</span> m_converter;<span class="m">//Word<span class="cj">转换器</span></span></span></div>
<div class="ln" style="top:816px"><span class="n">67</span><span class="t">QByteArray m_imgMem;</span></div>
<div class="ln" style="top:832px"><span class="n">68</span><span class="t"><span class="m">//gdi+</span></span></div>
<div class="ln" style="top:848px"><span class="n">69</span><span class="t">WinINetPoster m_poster;</span></div>
<div class="ln" style="top:864px"><span class="n">70</span><span class="t">HtmlClipboard m_clp;<span class="m">//HTML<span class="cj">剪帖板</span></span></span></div>
<div class="ln" style="top:880px"><span class="n">71</span><span class="t"><span class="m">//server* m_svr;</span></span></div>
<div class="ln" style="top:896px"><span class="n">72</span><span class="t">websocketpp::connection_hdl m_con;</span></div>
<div class="ln" style="top:912px"><span class="n">73</span><span class="t">boost::mutex m_send_mt;</span></div>
<div class="ln" style="top:928px"><span class="n">74</span><span class="t"><span class="m">//AppConfig m_cfg;</span></span></div>
<div class="ln" style="top:944px"><span class="n">75</span><span class="t"><span class="m">//TaskMgr m_tsk;</span></span></div>
<div class="ln" style="top:960px"><span class="n">76</span><span class="t"><span class="m">//WebServer* m_webSvr;</span></span></div>
<div class="ln" style="top:976px"><span class="n">77</span><span class="t">WordParserDataDef m_data;<span class="m">//</span></span></div>
<div class="ln" style="top:992px"><span class="n">78</span><span class="t">WordPasterex<span class="k">*</span> m_pasterEx;<span class="m">//<span class="cj">父类</span></span></span></div>
</div>
<svg style="left:60px;top:86px" width="216" height="4" viewBox="0 0 216 4"><path d="M0 2 L2 0.5 L4 3.5 L6 0.5 L8 3.5 L10 0.5 L12 3.5 L14 0.5 L16 3.5 L18 0.5 L20 3.5 L22 0.5 L24 3.5 L26 0.5 L28 3.5 L30 0.5 L32 3.5 L34 0.5 L36 3.5 L38 0.5 L40 3.5 L42 0.5 L44 3.5 L46 0.5 L48 3.5 L50 0.5 L52 3.5 L54 0.5 L56 3.5 L58 0.5 L60 3.5 L62 0.5 L64 3.5 L66 0.5 L68 3.5 L70 0.5 L72 3.5 L74 0.5 L76 3.5 L78 0.5 L80 3.5 L82 0.5 L84 3.5 L86 0.5 L88 3.5 L90 0.5 L92 3.5 L94 0.5 L96 3.5 L98 0.5 L100 3.5 L102 0.5 L104 3.5 L106 0.5 L108 3.5 L110 0.5 L112 3.5 L114 0.5 L116 3.5 L118 0.5 L120 3.5 L122 0.5 L124 3.5 L126 0.5 L128 3.5 L130 0.5 L132 3.5 L134 0.5 L136 3.5 L138 0.5 L140 3.5 L142 0.5 L144 3.5 L146 0.5 L148 3.5 L150 0.5 L152 3.5 L154 0.5 L156 3.5 L158 0.5 L160 3.5 L162 0.5 L164 3.5 L166 0.5 L168 3.5 L170 0.5 L172 3.5 L174 0.5 L176 3.5 L178 0.5 L180 3.5 L182 0.5 L184 3.5 L186 0.5 L188 3.5 L190 0.5 L192 3.5 L194 0.5 L196 3.5 L198 0.5 L200 3.5 L202 0.5 L204 3.5 L206 0.5 L208 3.5 L210 0.5 L212 3.5 L214 0.5 L216 3.5" fill="none" stroke="#e03a2a" stroke-width="0.9"/></svg>
<div class="a" style="left:60px;top:57px;width:694px;height:2px;background:#e2f6e5"></div>
<div class="a" style="left:60px;top:71px;width:694px;height:2px;background:#e2f6e5"></div>
<svg style="left:41px;top:153px" width="16" height="16" viewBox="0 0 16 16"><path d="M6 3.5 L10.5 8 L6 12.5" fill="none" stroke="#4a6a52" stroke-width="1.1"/></svg>
<svg style="left:41px;top:185px" width="16" height="16" viewBox="0 0 16 16"><path d="M6 3.5 L10.5 8 L6 12.5" fill="none" stroke="#4a6a52" stroke-width="1.1"/></svg>
<div class="a" style="left:60px;top:249px;width:1px;height:806px;background:#b9dfc0"></div>
<div class="a" style="left:751px;top:57px;width:1px;height:484px;background:#dcf5e0"></div>
<div class="a" style="left:754px;top:57px;width:1px;height:484px;background:#dcf5e0"></div>
<div class="a" style="left:755px;top:57px;width:13px;height:484px;background:#9dbca4"></div>
<div class="a" style="left:755px;top:541px;width:1px;height:514px;background:#b5d9bb"></div>
<div class="a" style="left:765px;top:64px;width:3px;height:8px;background:#c8483c"></div>
</div>
<div id="status">
<div class="a" style="left:0;top:0;width:34px;height:22px;background:#16825d"></div>
<svg style="left:9px;top:3px" width="16" height="16" viewBox="0 0 16 16"><path d="M3.5 6 L7.5 9.5 L3.5 13 M12.5 2.5 L8.5 6 L12.5 9.5" fill="none" stroke="#fff" stroke-width="1.3"/></svg>
<svg style="left:39px;top:3px" width="16" height="16" viewBox="0 0 16 16"><circle cx="4.5" cy="3.5" r="1.8" fill="none" stroke="#fff" stroke-width="1.1"/><circle cx="4.5" cy="12.5" r="1.8" fill="none" stroke="#fff" stroke-width="1.1"/><circle cx="11.5" cy="5.5" r="1.8" fill="none" stroke="#fff" stroke-width="1.1"/><path d="M4.5 5.3 V10.7 M11.5 7.3 C11.5 9.5 8 9.5 4.8 10.5" fill="none" stroke="#fff" stroke-width="1.1"/></svg>
<span class="it" style="left:58px"><i class="l">1.0.40</i></span>
<svg style="left:94px;top:3px" width="16" height="16" viewBox="0 0 16 16"><path d="M2.5 7.5 A5.5 5.5 0 0 1 12.5 4.5 M13.5 8.5 A5.5 5.5 0 0 1 3.5 11.5" fill="none" stroke="#fff" stroke-width="1.1"/><path d="M12.8 1.5 V4.8 H9.5 M3.2 14.5 V11.2 H6.5" fill="none" stroke="#fff" stroke-width="1.1"/></svg>
<svg style="left:122px;top:3px" width="16" height="16" viewBox="0 0 16 16"><circle cx="8" cy="8" r="6" fill="none" stroke="#fff" stroke-width="1.1"/><path d="M5.5 5.5 L10.5 10.5 M10.5 5.5 L5.5 10.5" fill="none" stroke="#fff" stroke-width="1.1"/></svg>
<span class="it" style="left:140px">2</span>
<svg style="left:149px;top:3px" width="16" height="16" viewBox="0 0 16 16"><path d="M8 2 L14.5 13.5 H1.5 Z" fill="none" stroke="#fff" stroke-width="1.1"/><path d="M8 6 V10 M8 11 V12.2" fill="none" stroke="#fff" stroke-width="1.1"/></svg>
<span class="it" style="left:167px">0</span>
<svg style="left:189px;top:4.5px" width="13" height="13" viewBox="0 0 16 16"><path d="M8 7 L4.5 14.5 M8 7 L11.5 14.5 M6 11.5 H10" fill="none" stroke="#fff" stroke-width="1.1"/><circle cx="8" cy="6" r="1.3" fill="none" stroke="#fff" stroke-width="1.1"/><path d="M4.8 9 A4.5 4.5 0 0 1 4.8 3 M11.2 3 A4.5 4.5 0 0 1 11.2 9 M2.8 10.5 A7 7 0 0 1 2.8 1.5 M13.2 1.5 A7 7 0 0 1 13.2 10.5" fill="none" stroke="#fff" stroke-width="1.1"/></svg>
<span class="it" style="left:206px">0</span>
<svg style="left:229px;top:3px" width="16" height="16" viewBox="0 0 16 16"><circle cx="8" cy="8" r="6" fill="none" stroke="#fff" stroke-width="1.1"/><path d="M8 7 V11.5 M8 4.5 V5.8" fill="none" stroke="#fff" stroke-width="1.1"/></svg>
<span class="it" style="left:247px"><i class="l">CMake: [Debug]:</i> 就绪</span>
<svg style="left:376px;top:3px" width="16" height="16" viewBox="0 0 16 16"><path d="M2 14 L8 8 M10 6 L14 2 M2 2 L5 5 M11 11 L14 14 M9 7 A3 3 0 1 1 13 3 M3 13 A2 2 0 1 0 6 10" fill="none" stroke="#fff" stroke-width="1.1"/></svg>
<span class="it" style="left:394px">未选择任何工具包</span>
<svg style="left:505px;top:3px" width="16" height="16" viewBox="0 0 16 16"><circle cx="8" cy="8" r="4.6" fill="none" stroke="#fff" stroke-width="1.1"/><rect x="7" y="1" width="2" height="3" transform="rotate(0 8 8)" fill="#fff"/><rect x="7" y="1" width="2" height="3" transform="rotate(45 8 8)" fill="#fff"/><rect x="7" y="1" width="2" height="3" transform="rotate(90 8 8)" fill="#fff"/><rect x="7" y="1" width="2" height="3" transform="rotate(135 8 8)" fill="#fff"/><rect x="7" y="1" width="2" height="3" transform="rotate(180 8 8)" fill="#fff"/><rect x="7" y="1" width="2" height="3" transform="rotate(225 8 8)" fill="#fff"/><rect x="7" y="1" width="2" height="3" transform="rotate(270 8 8)" fill="#fff"/><rect x="7" y="1" width="2" height="3" transform="rotate(315 8 8)" fill="#fff"/><circle cx="8" cy="8" r="1.6" fill="none" stroke="#fff" stroke-width="1.1"/></svg>
<span class="it" style="left:524px">生成</span>
<span class="it" style="left:564px">[all]</span>
<svg style="left:598px;top:3px" width="16" height="16" viewBox="0 0 16 16"><ellipse cx="8" cy="9" rx="3.4" ry="4.5" fill="none" stroke="#fff" stroke-width="1.1"/><path d="M5.5 5.5 A2.5 2.5 0 0 1 10.5 5.5 M1.5 5 L4.8 7 M1.5 9.5 H4.6 M1.5 14 L4.8 12 M14.5 5 L11.2 7 M14.5 9.5 H11.4 M14.5 14 L11.2 12" fill="none" stroke="#fff" stroke-width="1.1"/></svg>
<svg style="left:628px;top:3px" width="16" height="16" viewBox="0 0 16 16"><path d="M4.5 2.5 L12.5 8 L4.5 13.5 Z" fill="none" stroke="#fff" stroke-width="1.1"/></svg>
<svg style="left:658px;top:3px" width="16" height="16" viewBox="0 0 16 16"><path d="M5 1.5 H11 M6.5 1.5 V6 L2.5 14.5 H13.5 L9.5 6 V1.5 M4.5 10.5 H11.5" fill="none" stroke="#fff" stroke-width="1.1"/></svg>
<span class="it" style="left:677px">运行 <i class="l">CTest</i></span>
<svg style="left:749px;top:4px" width="14" height="14" viewBox="0 0 16 16"><path d="M8 2 L14 4.5 V11.5 L8 14 L2 11.5 V4.5 Z M2 4.5 L8 7 L14 4.5 M8 7 V14" fill="none" stroke="#fff" stroke-width="1.1"/></svg>
<span class="it" style="left:765px">运行 <i class="l">CPack</i></span>
<svg style="left:838px;top:3px" width="16" height="16" viewBox="0 0 16 16"><path d="M4.5 2.5 L12.5 8 L4.5 13.5 Z" fill="none" stroke="#fff" stroke-width="1.1"/></svg>
<span class="it" style="left:857px">运行工作流</span>
<span class="it" style="left:947px">C++</span>
<span class="it" style="left:985px">Mac</span>
<svg style="left:1023px;top:3px" width="16" height="16" viewBox="0 0 16 16"><path d="M3.5 11.5 V7 A4.5 4.5 0 0 1 12.5 7 V11.5 L13.5 12.5 H2.5 Z M6.5 12.5 A1.5 1.5 0 0 0 9.5 12.5" fill="none" stroke="#fff" stroke-width="1.1"/></svg>
<span class="a" style="left:942px;top:-6px;font-size:15.5px;color:rgba(255,255,255,0.22);white-space:nowrap;line-height:18px">@51CTO博客</span>
</div>
</body>
</html>
